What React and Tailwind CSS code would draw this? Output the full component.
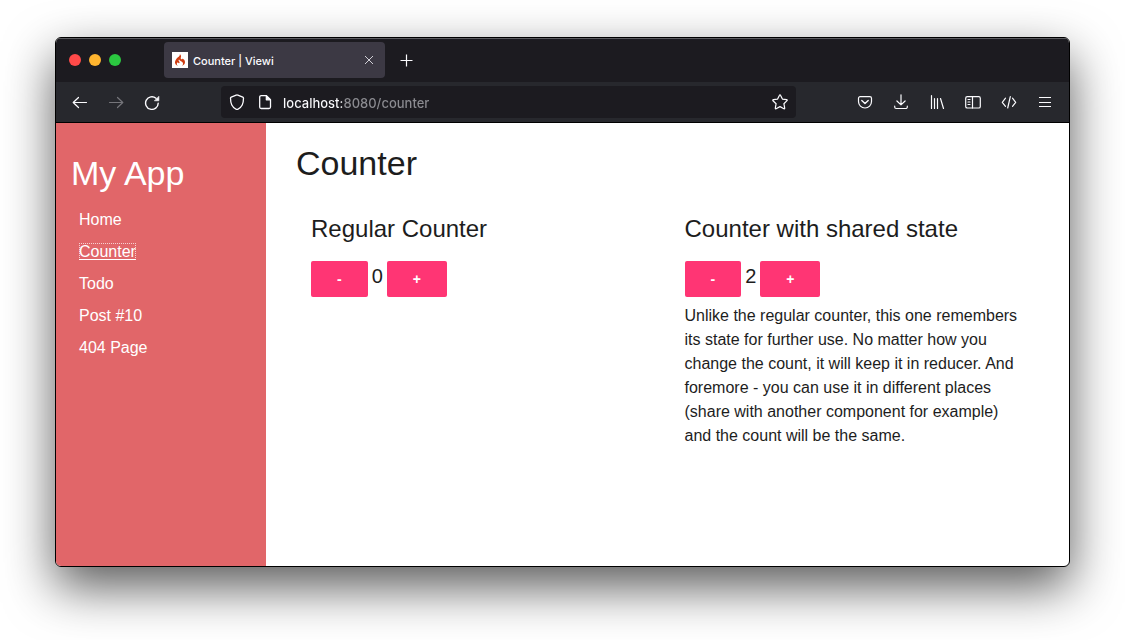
import { useState } from "react";
import { SiCodeigniter } from "react-icons/si";

function Icon({ children, className = "" }) {
  return (
    <svg
      className={`size-4 shrink-0 ${className}`}
      viewBox="0 0 16 16"
      fill="none"
      stroke="currentColor"
      strokeWidth="1.2"
      strokeLinecap="round"
      strokeLinejoin="round"
      aria-hidden="true"
    >
      {children}
    </svg>
  );
}

const icons = {
  back: <path d="M14.5 8.5H1.2M6.5 3.5l-5.3 5 5.3 5" />,
  forward: <path d="M1.5 8.5h13.3M9.5 3.5l5.3 5-5.3 5" />,
  reload: (
    <>
      <path d="M14.2 9.2A6.3 6.3 0 1 1 12 4.3" strokeWidth="1.4" />
      <path d="M14.9 2.6v4.2h-4.2z" fill="currentColor" strokeWidth="0.6" />
    </>
  ),
  shield: (
    <path
      d="M8 .9c.3 0 .5.1.8.2l5 2c.4.2.7.6.7 1 0 2-.2 4.7-1.3 6.9-1.1 2.2-2.7 3.6-4.5 4.3a2 2 0 0 1-1.4 0c-1.8-.7-3.4-2.1-4.5-4.3C1.7 8.8 1.5 6.1 1.5 4.1c0-.4.3-.8.7-1l5-2c.3-.1.5-.2.8-.2z"
      strokeWidth="1.3"
    />
  ),
  page: (
    <>
      <path d="M9.3 1.6H4.200a1.5 1.5 0 0 0-1.5 1.5v9.900a1.5 1.5 0 0 0 1.5 1.5h7.800a1.500 1.500 0 0 0 1.500-1.500V5.800z" strokeWidth="1.3" />
      <path d="M9.3 1.6v4.200h4.200z" fill="currentColor" />
    </>
  ),
  star: (
    <path d="M7.500 1.200a.55.55 0 0 1 1 0l1.900 3.900 4.300.6c.5.1.7.6.3 1l-3.100 3 .8 4.400c.1.500-.4.800-.8.600L8 12.600l-3.900 2.100c-.4.2-.9-.1-.8-.6l.8-4.400L1 6.700c-.4-.4-.2-.9.300-1l4.300-.6z" />
  ),
  pocket: (
    <>
      <path d="M3.200 2.600h9.600a1.700 1.700 0 0 1 1.700 1.700v3.200a6.500 6.500 0 0 1-13 0V4.300a1.700 1.700 0 0 1 1.700-1.700z" />
      <path d="M4.800 6.500 8 9.500l3.200-3" strokeWidth="1.4" />
    </>
  ),
  download: (
    <path d="M8 .8v10M3.900 7 8 10.900 12.100 7M1.700 12.200v.8a1.500 1.500 0 0 0 1.500 1.500h9.600a1.500 1.500 0 0 0 1.500-1.500v-.8" />
  ),
  library: <path d="M2.500 1.500v13M5.500 4.500v10M8.500 4.500v10M11.500 4.500l3 10" />,
  sidebar: (
    <>
      <rect x="0.7" y="2.6" width="14.6" height="11.4" rx="1.6" />
      <path d="M7.500 2.600V14M3 5.500h2M3 8h2M3 10.500h2" />
    </>
  ),
  code: <path d="M4.500 4.200 1.300 8.300l3.200 4.100M11.500 4.200l3.200 4.100-3.200 4.100M9.300 2.600 6.700 14" />,
  menu: <path d="M2.500 3.500h11M2.500 8.500h11M2.500 12.500h11" strokeLinecap="square" strokeWidth="1" />,
};

function ToolButton({ icon, label, disabled = false }) {
  return (
    <button
      type="button"
      aria-label={label}
      disabled={disabled}
      className="flex h-8 w-9 items-center justify-center rounded text-[#fbfbfe] disabled:text-[#75757a]"
    >
      <Icon>{icons[icon]}</Icon>
    </button>
  );
}

function TabBar() {
  return (
    <div className="flex h-11 items-center border-t border-[#5c5c60] bg-[#1c1b20] pb-px">
      <div className="flex w-[108px] gap-2 pl-[13px]">
        <button type="button" aria-label="Close window" className="size-3 rounded-full bg-[#ff4a49]" />
        <button type="button" aria-label="Minimize window" className="size-3 rounded-full bg-[#ffb52f]" />
        <button type="button" aria-label="Zoom window" className="size-3 rounded-full bg-[#2bc840]" />
      </div>
      <div className="flex h-9 w-[221px] items-center rounded bg-[#3c3944] pr-[11px] pl-2 text-[#fbfbfe]">
        <span className="flex size-4 items-center justify-center bg-white text-[#cf3d12]">
          <SiCodeigniter className="size-3" aria-hidden="true" />
        </span>
        <span className="ml-[5px] flex-1 pt-0.5 text-[11px] leading-4 font-medium">Counter | Viewi</span>
        <button type="button" aria-label="Close tab" className="text-[#d0cfd6]">
          <svg className="size-[10px]" viewBox="0 0 10 10" stroke="currentColor" aria-hidden="true">
            <path d="M1 1l8 8M9 1l-8 8" />
          </svg>
        </button>
      </div>
      <button type="button" aria-label="New tab" className="ml-[15px] text-[#fbfbfe]">
        <svg className="size-[13px]" viewBox="0 0 13 13" stroke="currentColor" strokeWidth="1.2" aria-hidden="true">
          <path d="M6.500 .5v12M.5 6.500h12" />
        </svg>
      </button>
    </div>
  );
}

function Toolbar() {
  return (
    <div className="flex h-[41px] items-start border-b border-black bg-[#27282d] px-1.5 pt-1">
      <div className="flex">
        <ToolButton icon="back" label="Back" />
        <ToolButton icon="forward" label="Forward" disabled />
        <ToolButton icon="reload" label="Reload" />
      </div>
      <div className="mx-[51px] flex h-8 min-w-0 flex-1 items-center rounded bg-[#1c1b20] px-2 text-[#fbfbfe]">
        <Icon>{icons.shield}</Icon>
        <Icon className="ml-3">{icons.page}</Icon>
        <input
          type="text"
          aria-label="Address"
          defaultValue="localhost:8080/counter"
          className="ml-[10px] min-w-0 flex-1 bg-linear-to-r from-[#fbfbfe] from-[59px] to-[#8c8c91] to-[59px] bg-clip-text pt-0.5 text-[13px] leading-5 font-medium text-transparent caret-white outline-none"
        />
        <button type="button" aria-label="Bookmark this page">
          <Icon>{icons.star}</Icon>
        </button>
      </div>
      <div className="flex">
        <ToolButton icon="pocket" label="Save to Pocket" />
        <ToolButton icon="download" label="Downloads" />
        <ToolButton icon="library" label="Library" />
        <ToolButton icon="sidebar" label="Sidebars" />
        <ToolButton icon="code" label="Developer tools" />
        <ToolButton icon="menu" label="Menu" />
      </div>
    </div>
  );
}

const links = [
  { label: "Home", href: "#home" },
  { label: "Counter", href: "#counter", current: true },
  { label: "Todo", href: "#todo" },
  { label: "Post #10", href: "#post-10" },
  { label: "404 Page", href: "#404" },
];

function Sidebar() {
  return (
    <nav className="w-[210px] shrink-0 bg-[#e16669] px-[15px] pt-[29px] text-white">
      <div className="text-[34px] leading-[42px]">My App</div>
      <ul className="mt-[14px] flex flex-col gap-2 px-2 text-base">
        {links.map((link) => (
          <li key={link.label}>
            <a
              href={link.href}
              aria-current={link.current ? "page" : undefined}
              className={
                link.current
                  ? "underline underline-offset-2 outline-1 -outline-offset-1 outline-white/70 outline-dotted"
                  : "hover:underline"
              }
            >
              {link.label}
            </a>
          </li>
        ))}
      </ul>
    </nav>
  );
}

function StepButton({ children, label, onClick }) {
  return (
    <button
      type="button"
      aria-label={label}
      onClick={onClick}
      className="h-9 rounded-xs bg-[#ff3574] px-[26px] text-sm font-bold text-white"
    >
      {children}
    </button>
  );
}

function Counter({ title, initial, children }) {
  const [count, setCount] = useState(initial);
  return (
    <section className="px-[15px]">
      <h2 className="text-2xl leading-8">{title}</h2>
      <div className="mt-4 flex gap-1">
        <StepButton label="Decrease" onClick={() => setCount(count - 1)}>
          -
        </StepButton>
        <span className="text-xl leading-[30px]">{count}</span>
        <StepButton label="Increase" onClick={() => setCount(count + 1)}>
          +
        </StepButton>
      </div>
      {children}
    </section>
  );
}

export default function App() {
  return (
    <div className="flex min-h-screen flex-col overflow-hidden bg-white px-[55px] pt-[37px] pb-[73px] font-['Inter',sans-serif]">
      <div className="flex flex-1 flex-col overflow-hidden rounded-md border border-black bg-white shadow-[0_20px_50px_rgba(0,0,0,0.65)]">
        <TabBar />
        <Toolbar />
        <div className="flex flex-1 font-['Liberation_Sans',Arial,sans-serif] text-[#1d1d1d]">
          <Sidebar />
          <main className="min-w-0 flex-1 pt-[19px] pr-[26px] pb-8 pl-[30px]">
            <h1 className="text-[34px] leading-[42px]">Counter</h1>
            <div className="mt-[29px] grid grid-cols-2">
              <Counter title="Regular Counter" initial={0} />
              <Counter title="Counter with shared state" initial={2}>
                <p className="mt-[7px] text-base">
                  Unlike the regular counter, this one remembers its state for further use. No matter how you change
                  the count, it will keep it in reducer. And foremore - you can use it in different places (share with
                  another component for example) and the count will be the same.
                </p>
              </Counter>
            </div>
          </main>
        </div>
      </div>
    </div>
  );
}
